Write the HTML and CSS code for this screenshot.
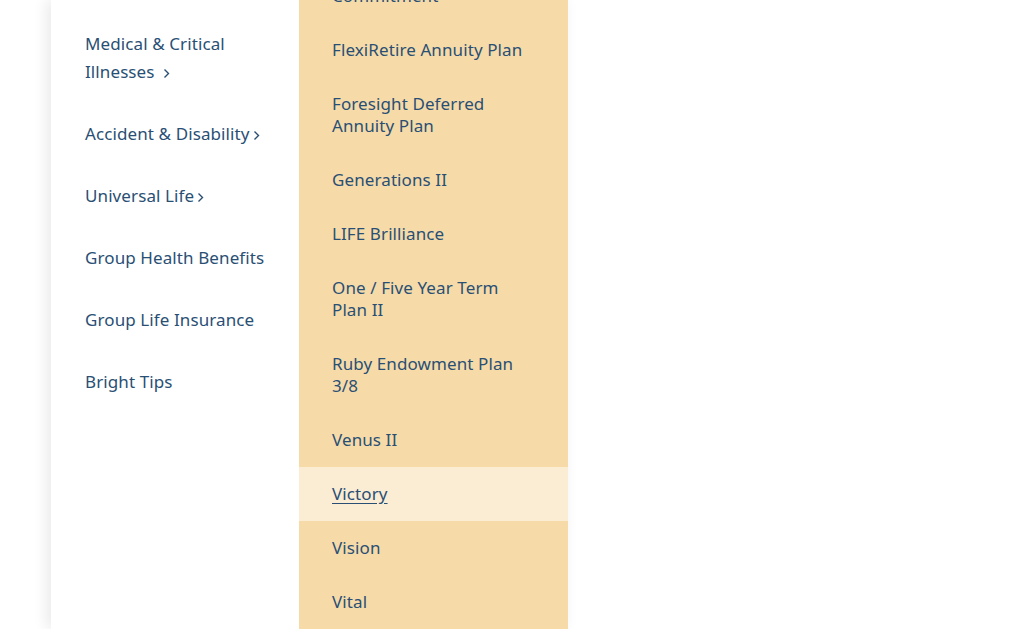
FILE: index.html
```html
<!DOCTYPE html>
<html lang="en">
<head>
  <meta charset="UTF-8">
  <title>Products menu</title>
  <meta name="viewport" content="width=device-width, initial-scale=1.0">
  <link rel="stylesheet" href="styles.css">
</head>
<body>
  <div class="menu">
    <ul class="main-list">
      <li><a href="#">Medical &amp; Critical Illnesses&nbsp;<svg class="chev wide" viewBox="0 0 7 11"><path d="M1.5 1.5 L5.5 5.5 L1.5 9.5"/></svg></a></li>
      <li><a href="#">Accident &amp; Disability<svg class="chev" viewBox="0 0 7 11"><path d="M1.5 1.5 L5.5 5.5 L1.5 9.5"/></svg></a></li>
      <li><a href="#">Universal Life<svg class="chev" viewBox="0 0 7 11"><path d="M1.5 1.5 L5.5 5.5 L1.5 9.5"/></svg></a></li>
      <li><a href="#">Group Health Benefits</a></li>
      <li><a href="#">Group Life Insurance</a></li>
      <li><a href="#">Bright Tips</a></li>
    </ul>

    <ul class="sub-list">
      <li><a href="#">Commitment</a></li>
      <li><a href="#">FlexiRetire Annuity Plan</a></li>
      <li><a href="#">Foresight Deferred Annuity Plan</a></li>
      <li><a href="#">Generations II</a></li>
      <li><a href="#">LIFE Brilliance</a></li>
      <li><a href="#">One / Five Year Term Plan II</a></li>
      <li><a href="#">Ruby Endowment Plan 3/8</a></li>
      <li><a href="#">Venus II</a></li>
      <li class="active"><a href="#">Victory</a></li>
      <li><a href="#">Vision</a></li>
      <li><a href="#">Vital</a></li>
    </ul>
  </div>
</body>
</html>
```

FILE: styles.css
```css
body {
  margin: 0;
  background: #fff;
  font-family: "Noto Sans", Arial, sans-serif;
  font-size: 17px;
  letter-spacing: 0.1px;
  color: #2a4f74;
  height: 629px;
  overflow: hidden;
}

ul {
  list-style: none;
  margin: 0;
  padding: 0;
}

a {
  color: inherit;
  text-decoration: none;
}

.menu {
  display: flex;
  margin-left: 51px;
  width: 517px;
  height: 629px;
  background: #fff;
  box-shadow: -4px 0 14px rgba(0, 0, 0, 0.09);
}

.main-list {
  width: 248px;
  padding-top: 13px;
  box-sizing: border-box;
}

.main-list li {
  padding: 17px 30px 17px 34px;
  line-height: 28px;
}

.chev {
  width: 7px;
  height: 11px;
  margin-left: 3px;
  fill: none;
  stroke: #2a4f74;
  stroke-width: 1.4;
  vertical-align: -1px;
}

.chev.wide {
  margin-left: 4px;
}

.sub-list {
  width: 269px;
  background: #f6dba9;
  overflow: hidden;
}

.sub-list li {
  padding: 16px 38px 16px 33px;
  line-height: 22px;
}

.sub-list li:first-child {
  margin-top: -31px;
}

.sub-list li.active {
  background: #fbecd4;
}

.sub-list li.active a {
  text-decoration: underline;
  text-underline-offset: 3px;
}
```
